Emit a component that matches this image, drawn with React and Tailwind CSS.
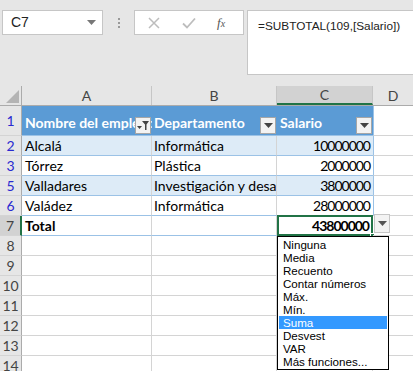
import React from "react"

const cellFont = { fontFamily: "Lato, 'Liberation Sans', sans-serif" }
const uiFont = { fontFamily: "'Liberation Sans', Arial, sans-serif" }

const rows = [
  { n: "2", a: "Alcalá", b: "Informática", c: "10000000", band: true },
  { n: "3", a: "Tórrez", b: "Plástica", c: "2000000" },
  { n: "5", a: "Valladares", b: "Investigación y desarrollo", c: "3800000", band: true },
  { n: "6", a: "Valádez", b: "Informática", c: "28000000" },
]

const menu = ["Ninguna", "Media", "Recuento", "Contar números", "Máx.", "Mín.", "Suma", "Desvest", "VAR", "Más funciones..."]

const FilterButton = ({ funnel }) => (
  <div className="absolute right-[1px] bottom-[1px] w-[16px] h-[17px] bg-[#f3f3f3] border border-[#a6a6a6] flex items-center justify-center">
    {funnel ? (
      <svg width="12" height="11" viewBox="0 0 12 11">
        <path d="M5 1h7L9.5 4.5V10H8V4.5z" fill="#444" />
        <path d="M0 6h5L2.5 9z" fill="#444" />
      </svg>
    ) : (
      <svg width="9" height="5" viewBox="0 0 9 5">
        <path d="M0 0h9L4.5 5z" fill="#444" />
      </svg>
    )}
  </div>
)

const RowHead = ({ n, color = "text-[#444]", selected }) => (
  <div
    className={`w-[22px] shrink-0 flex items-center justify-center text-[14px] border-b border-[#d4d4d4] ${color} ${
      selected ? "bg-[#d2d2d2] border-r-2 border-r-[#217346]" : "bg-[#e6e6e6] border-r border-r-[#ababab]"
    }`}
  >
    {n}
  </div>
)

export default function App() {
  return (
    <div className="w-[413px] h-[371px] overflow-hidden bg-white relative text-black" style={cellFont}>
      {/* formula bar */}
      <div className="h-[86px] bg-[#e6e6e6] flex items-start pt-[10px] pl-[2px]" style={uiFont}>
        <div className="w-[101px] h-[25px] bg-white border border-[#c6c6c6] flex items-center justify-between pl-[8px] pr-[6px] text-[14px] text-[#222]">
          <span>C7</span>
          <svg width="9" height="5" viewBox="0 0 9 5">
            <path d="M0 0h9L4.5 5z" fill="#777" />
          </svg>
        </div>
        <div className="w-[31px] h-[25px] flex flex-col items-center justify-center gap-[2px]">
          <span className="w-[2px] h-[2px] bg-[#999]" />
          <span className="w-[2px] h-[2px] bg-[#999]" />
          <span className="w-[2px] h-[2px] bg-[#999]" />
        </div>
        <div className="w-[110px] h-[25px] bg-white border border-[#c6c6c6] flex items-center">
          <svg width="12" height="12" viewBox="0 0 12 12" className="ml-[13px]">
            <path d="M1 1l10 10M11 1L1 11" stroke="#bdbdbd" strokeWidth="1.5" />
          </svg>
          <svg width="14" height="12" viewBox="0 0 14 12" className="ml-[22px]">
            <path d="M1 6.5l4 4L13 1.5" stroke="#bdbdbd" strokeWidth="1.8" fill="none" />
          </svg>
          <span className="ml-[21px] text-[13px] italic text-[#555]" style={{ fontFamily: "'Liberation Serif', serif" }}>
            f<span className="text-[10px]">x</span>
          </span>
        </div>
        <div className="ml-[3px] flex-1 h-[65px] bg-white border border-[#c6c6c6] border-r-0 pl-[10px] pt-[7px] text-[11.8px] text-[#222] whitespace-nowrap overflow-hidden">
          =SUBTOTAL(109,[Salario])
        </div>
      </div>

      {/* column headers */}
      <div className="flex h-[20px] bg-[#e6e6e6] text-[14px] text-[#444] border-b border-[#ababab]">
        <div className="w-[22px] shrink-0 border-r border-[#ababab] flex items-end justify-end p-[2px]">
          <svg width="13" height="13" viewBox="0 0 13 13">
            <path d="M13 0v13H0z" fill="#b4b4b4" />
          </svg>
        </div>
        <div className="w-[130px] shrink-0 border-r border-[#c6c6c6] flex items-center justify-center">A</div>
        <div className="w-[125px] shrink-0 border-r border-[#c6c6c6] flex items-center justify-center">B</div>
        <div className="w-[96px] shrink-0 bg-[#d2d2d2] border-b-2 border-[#217346] border-r border-r-[#c6c6c6] flex items-center justify-center">C</div>
        <div className="flex-1 flex items-center justify-center">D</div>
      </div>

      {/* header row of table */}
      <div className="flex h-[30px]">
        <RowHead n="1" color="text-[#2a2ad0]" />
        <div className="w-[130px] shrink-0 bg-[#5b9bd5] relative flex items-end pl-[3px] pb-[2px] text-white font-bold text-[14px] whitespace-nowrap overflow-hidden border-b border-[#9bc2e6]">
          Nombre del empleado
          <FilterButton funnel />
        </div>
        <div className="w-[125px] shrink-0 bg-[#5b9bd5] relative flex items-end pl-[2px] pb-[2px] text-white font-bold text-[14px] whitespace-nowrap overflow-hidden border-b border-[#9bc2e6]">
          Departamento
          <FilterButton />
        </div>
        <div className="w-[96px] shrink-0 bg-[#5b9bd5] relative flex items-end pl-[3px] pb-[2px] text-white font-bold text-[14px] whitespace-nowrap overflow-hidden border-b border-[#9bc2e6]">
          Salario
          <FilterButton />
        </div>
        <div className="flex-1 border-l border-[#9bc2e6] border-b border-b-[#d4d4d4]" />
      </div>

      {rows.map((r) => (
        <div key={r.n} className="flex h-[20px] text-[14px]">
          <RowHead n={r.n} color="text-[#2a2ad0]" />
          <div className={`w-[130px] shrink-0 border-b border-[#9bc2e6] border-r border-r-[#d4d4d4] pl-[3px] flex items-center whitespace-nowrap overflow-hidden ${r.band ? "bg-[#ddebf7]" : "bg-white"}`}>
            {r.a}
          </div>
          <div className={`w-[125px] shrink-0 border-b border-[#9bc2e6] border-r border-r-[#d4d4d4] pl-[2px] flex items-center whitespace-nowrap overflow-hidden ${r.band ? "bg-[#ddebf7]" : "bg-white"}`}>
            {r.b}
          </div>
          <div className={`w-[96px] shrink-0 border-b border-[#9bc2e6] pr-[3px] flex items-center justify-end tracking-[-1px] ${r.band ? "bg-[#ddebf7]" : "bg-white"}`}>
            {r.c}
          </div>
          <div className="flex-1 border-l border-[#9bc2e6] border-b border-b-[#d4d4d4]" />
        </div>
      ))}

      {/* total row */}
      <div className="flex h-[20px] text-[14px]">
        <RowHead n="7" selected />
        <div className="w-[130px] shrink-0 border-b border-[#9bc2e6] border-r border-r-[#d4d4d4] pl-[3px] flex items-center font-bold">Total</div>
        <div className="w-[125px] shrink-0 border-b border-[#9bc2e6] border-r border-r-[#d4d4d4]" />
        <div className="w-[96px] shrink-0 border-2 border-[#217346] -mt-[1px] h-[21px] pr-[2px] flex items-center justify-end font-bold tracking-[-1px] relative">
          43800000
          <span className="absolute -right-[4px] -bottom-[4px] w-[5px] h-[5px] bg-[#217346] border border-white" />
        </div>
        <div className="flex-1 border-b border-[#d4d4d4] relative">
          <div className="absolute left-[1px] -top-[2px] w-[16px] h-[19px] bg-[#f3f3f3] border border-[#c6c6c6] flex items-center justify-center">
            <svg width="9" height="5" viewBox="0 0 9 5">
              <path d="M0 0h9L4.5 5z" fill="#555" />
            </svg>
          </div>
        </div>
      </div>

      {["8", "9", "10", "11", "12", "13", "14"].map((n) => (
        <div key={n} className="flex h-[20px] text-[14px]">
          <RowHead n={n} />
          <div className="w-[130px] shrink-0 border-b border-r border-[#d4d4d4]" />
          <div className="w-[125px] shrink-0 border-b border-r border-[#d4d4d4]" />
          <div className="w-[96px] shrink-0 border-b border-r border-[#d4d4d4]" />
          <div className="flex-1 border-b border-[#d4d4d4]" />
        </div>
      ))}

      {/* subtotal dropdown */}
      <div className="absolute left-[277px] top-[236px] w-[112px] bg-white border border-black py-[1px]" style={uiFont}>
        {menu.map((m) => (
          <div
            key={m}
            className={`h-[13px] leading-[13px] text-[11.6px] pl-[4px] mx-[1px] whitespace-nowrap ${m === "Suma" ? "bg-[#3399ff] text-white" : "text-black"}`}
          >
            {m}
          </div>
        ))}
      </div>
    </div>
  )
}
